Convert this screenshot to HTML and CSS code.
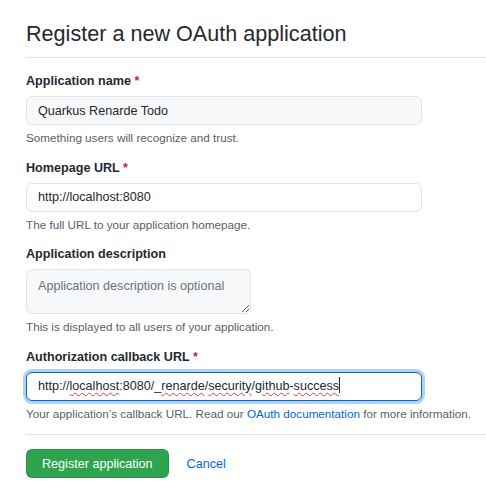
FILE: index.html
```html
<!DOCTYPE html>
<html lang="en">
  <head>
    <meta charset="UTF-8" />
    <meta name="viewport" content="width=device-width, initial-scale=1.0" />
    <title>Register a new OAuth application</title>
    <link rel="stylesheet" href="styles.css">
  </head>
  <body>
    <div class="page">
      <div class="subhead">
        <h2>Register a new OAuth application</h2>
      </div>

      <form class="oauth-form" onsubmit="return false">
        <!-- Application name -->
        <div class="form-group">
          <label for="appName">Application name <span class="required">*</span></label>
          <input type="text" id="appName" class="form-control filled" value="Quarkus Renarde Todo" />
          <p class="note">Something users will recognize and trust.</p>
        </div>

        <!-- Homepage -->
        <div class="form-group">
          <label for="homepage">Homepage URL <span class="required">*</span></label>
          <input type="text" id="homepage" class="form-control" value="http://localhost:8080" />
          <p class="note">The full URL to your application homepage.</p>
        </div>

        <!-- Description -->
        <div class="form-group">
          <label for="description">Application description</label>
          <textarea id="description" class="form-control filled description" placeholder="Application description is optional"></textarea>
          <p class="note">This is displayed to all users of your application.</p>
        </div>

        <!-- Callback, shown focused with spellcheck marks -->
        <div class="form-group">
          <label>Authorization callback URL <span class="required">*</span></label>
          <div class="form-control focused">http://<span class="typo">localhost</span>:8080/_<span class="typo">renarde</span>/<span class="typo">security</span>/<span class="typo">github</span>-<span class="typo">success</span><span class="caret"></span></div>
          <p class="note">Your application’s callback URL. Read our <a href="#">OAuth documentation</a> for more information.</p>
        </div>

        <div class="form-actions">
          <button type="submit" class="btn-primary">Register application</button>
          <a href="#" class="cancel">Cancel</a>
        </div>
      </form>
    </div>
  </body>
</html>
```

FILE: styles.css
```css
body {
  margin: 0;
  font-family: "Liberation Sans", Arial, sans-serif;
  font-size: 12.6px;
  color: #24292e;
  background: #fff;
}
.page {
  padding: 16px 0 0 26px;
}
.subhead {
  border-bottom: 1px solid #e1e4e8;
  padding-bottom: 5px;
  margin-bottom: 13px;
}
.subhead h2 {
  margin: 0;
  font-size: 21.6px;
  font-weight: 400;
  line-height: 36px;
}
.form-group {
  margin-bottom: 10.5px;
}
.form-group label {
  display: block;
  font-weight: 700;
  line-height: 21px;
  margin-bottom: 4px;
}
.required {
  color: #cb2431;
}
.form-control {
  box-sizing: border-box;
  display: block;
  width: 396px;
  height: 29px;
  margin: 0;
  padding: 0 11px;
  font-family: inherit;
  font-size: 12.6px;
  line-height: 27px;
  color: #24292e;
  background: #fff;
  border: 1px solid #e1e4e8;
  border-radius: 6px;
  outline: none;
}
.form-control.filled {
  background: #f6f8fa;
}
.description {
  width: 225px;
  height: 45px;
  padding: 6px 11px 4px;
  line-height: 20px;
  resize: vertical;
}
.description::placeholder {
  color: #6a737d;
}
.focused {
  border-color: #0366d6;
  box-shadow: 0 0 0 3px rgba(3, 102, 214, 0.3);
  white-space: nowrap;
}
.typo {
  text-decoration: underline wavy #e0403f;
  text-decoration-thickness: 1px;
  text-underline-offset: 2px;
}
.caret {
  display: inline-block;
  width: 1px;
  height: 16px;
  background: #24292e;
  vertical-align: -3px;
}
.note {
  margin: 4px 0 0;
  font-size: 11.7px;
  line-height: 18px;
  color: #586069;
}
.note a,
.cancel {
  color: #0366d6;
  text-decoration: none;
}
.form-actions {
  display: flex;
  align-items: center;
  gap: 18px;
  margin-top: 11.5px;
  padding-top: 14px;
  border-top: 1px solid #e1e4e8;
}
.btn-primary {
  height: 29px;
  padding: 0 15px;
  font-family: inherit;
  font-size: 12.6px;
  color: #fff;
  background: #2ea44f;
  border: 1px solid rgba(27, 31, 35, 0.15);
  border-radius: 6px;
  cursor: pointer;
}
```
